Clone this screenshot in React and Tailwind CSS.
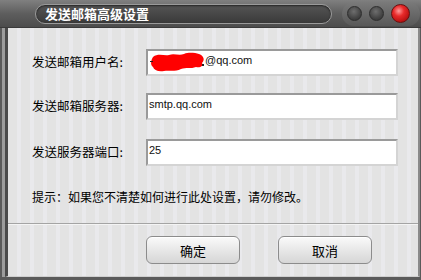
export default function App() {
  const rows = [
    { label: '发送邮箱用户名:', value: '@qq.com', redacted: true },
    { label: '发送邮箱服务器:', value: 'smtp.qq.com' },
    { label: '发送服务器端口:', value: '25' },
  ];

  return (
    <div className="w-[421px] h-[280px] flex flex-col bg-[#5a5a5a] font-['Noto_Sans_CJK_SC',sans-serif] overflow-hidden">
      {/* Title bar */}
      <div className="h-[28px] flex items-center bg-[linear-gradient(#808080,#5e5e5e_50%,#4c4c4c)] border-b border-[#3a3a3a]">
        <div className="ml-[35px] w-[297px] h-[20px] flex items-center rounded-full border border-[#9a9a9a] bg-[linear-gradient(#555,#3a3a3a)] shadow-[inset_0_1px_2px_rgba(0,0,0,0.6)]">
          <span className="ml-[9px] text-[13px] font-bold text-white leading-none">发送邮箱高级设置</span>
        </div>
        <div className="ml-[10px] h-[24px] w-[78px] flex items-center gap-[7px] pl-[5px] rounded-full bg-[linear-gradient(#7a7a7a,#585858)]">
          <div className="w-[15px] h-[15px] rounded-full border border-[#2e2e2e] bg-[radial-gradient(circle_at_45%_35%,#6e6e6e,#444_60%,#2e2e2e)]" />
          <div className="w-[15px] h-[15px] rounded-full border border-[#2e2e2e] bg-[radial-gradient(circle_at_45%_35%,#6e6e6e,#444_60%,#2e2e2e)]" />
          <div className="w-[19px] h-[19px] rounded-full border border-[#6a1010] bg-[radial-gradient(circle_at_40%_35%,#ff9a9a,#e82a2a_35%,#b00c0c_80%)]" />
        </div>
      </div>

      {/* Frame */}
      <div className="flex-1 flex pl-[2px] pr-[1px] pb-[3px]">
        <div className="flex-1 flex border-l-[3px] border-[#9c9c9c]">
          <div className="flex-1 flex flex-col border-l-[3px] border-r-[2px] border-b-[1px] border-l-[#4a4a4a] border-r-[#8a8a8a] border-b-[#cfcfcf] bg-[repeating-linear-gradient(90deg,#e3e3e3_0,#e3e3e3_9px,#e9e9ec_9px,#e9e9ec_13px)]">
            <div className="flex flex-col pt-[21px] pl-[24px]">
              {rows.map((r, i) => (
                <div key={i} className={`flex items-center ${i === 1 ? 'mt-[17px]' : i === 2 ? 'mt-[19px]' : ''}`}>
                  <span className="w-[114px] text-[12.5px] text-black leading-none">{r.label}</span>
                  <div className="w-[252px] h-[27px] bg-white border-2 border-t-[#9a9a9a] border-l-[#9a9a9a] border-r-[#d4d4d4] border-b-[#d4d4d4] flex items-start pt-[2px] pl-[1px]">
                    {r.redacted && (
                      <svg width="56" height="20" viewBox="0 0 56 20" className="-mt-[1px] shrink-0">
                        <path d="M4 5 C9 1 15 4 20 3 C25 1 30 4 35 2 C40 0 46 1 50 2 C55 4 56 8 53 11 C55 14 51 16 47 15 C42 17 37 15 32 17 C26 20 20 18 15 19 C9 20 5 18 4 15 C1 13 2 8 4 5 Z" fill="#ff0000" />
                        <rect x="1" y="9" width="3" height="1" fill="#222" />
                        <rect x="53" y="12" width="2" height="2" fill="#222" />
                      </svg>
                    )}
                    <span className="font-['Liberation_Sans',sans-serif] text-[11px] text-[#101010] leading-[14px]">{r.value}</span>
                  </div>
                </div>
              ))}
              <p className="mt-[23px] text-[12px] text-black leading-[16px]">提示：如果您不清楚如何进行此处设置，请勿修改。</p>
            </div>
            <div className="mt-[18px] h-[2px] border-t border-[#a4a4a4] bg-[#f4f4f4]" />
            <div className="flex pl-[138px] gap-[38px] mt-[11px]">
              {['确定', '取消'].map((t) => (
                <button key={t} className="w-[94px] h-[28px] rounded-[6px] border border-[#8c8c8c] bg-[linear-gradient(#fafafa,#e4e4e4_60%,#d6d6d6)] text-[13px] text-black leading-none flex items-center justify-center shadow-[inset_0_1px_0_#fff]">
                  {t}
                </button>
              ))}
            </div>
          </div>
        </div>
      </div>
    </div>
  );
}
